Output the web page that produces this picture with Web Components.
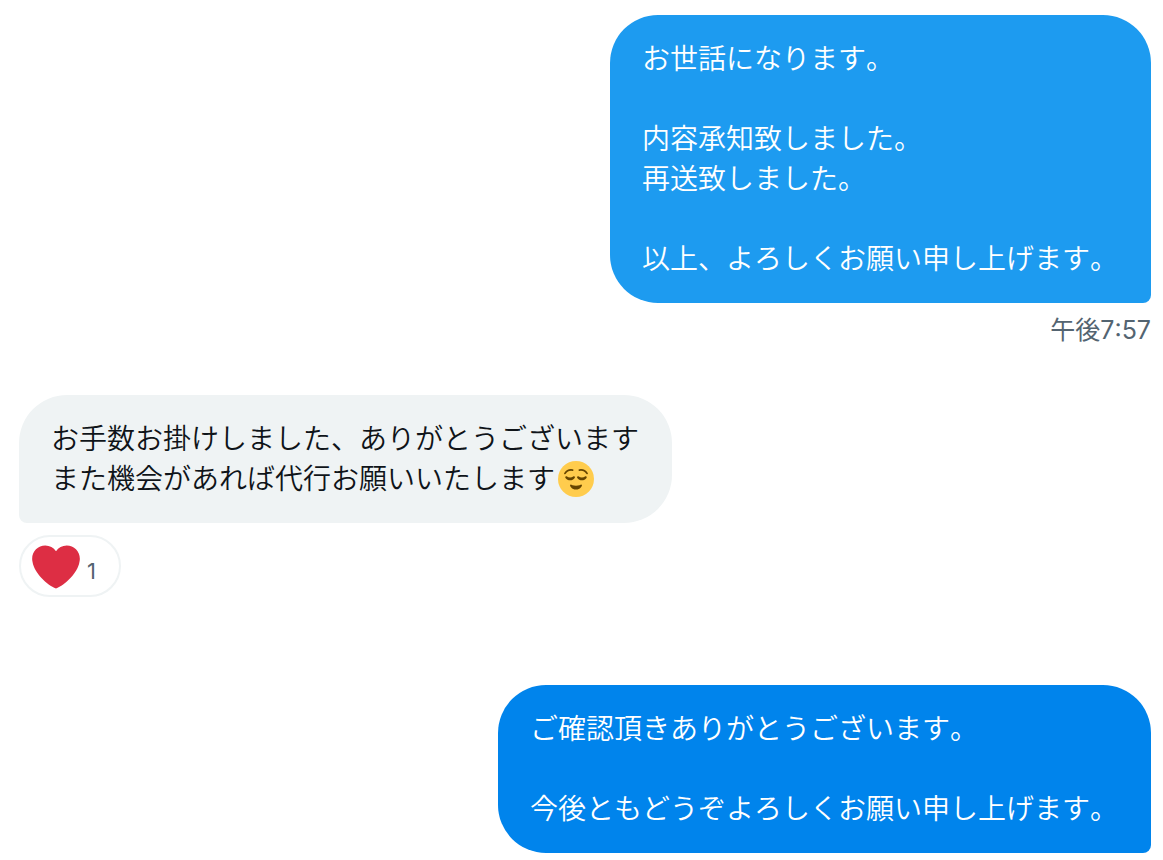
<!DOCTYPE html>
<html lang="ja">
<head>
<meta charset="utf-8">
<meta name="viewport" content="width=device-width, initial-scale=1">
<title>メッセージ</title>
<style>
  body {
    margin: 0;
    background: #ffffff;
    font-family: "Noto Sans CJK JP", sans-serif;
    font-kerning: none;
  }
</style>
</head>
<body>
<chat-thread>
  <chat-message side="sent">
    お世話になります。<br><br>内容承知致しました。<br>再送致しました。<br><br>以上、よろしくお願い申し上げます。
    <time slot="meta" datetime="19:57">午後7:57</time>
  </chat-message>
  <chat-message side="received">
    お手数お掛けしました、ありがとうございます<br>また機会があれば代行お願いいたします<relieved-face></relieved-face>
    <heart-reaction slot="meta" count="1"></heart-reaction>
  </chat-message>
  <chat-message side="sent" active>
    ご確認頂きありがとうございます。<br><br>今後ともどうぞよろしくお願い申し上げます。
  </chat-message>
</chat-thread>

<script>
class ChatThread extends HTMLElement {
  constructor() {
    super();
    this.attachShadow({ mode: 'open' });
    this.shadowRoot.innerHTML = `
      <style>
        :host {
          display: block;
        }

        main {
          display: flex;
          flex-direction: column;
          padding: 15px 12px 7px 19px;
        }

        ::slotted(chat-message:nth-child(2)) {
          margin-top: 48px;
        }

        ::slotted(chat-message:nth-child(3)) {
          margin-top: 88px;
        }
      </style>
      <main><slot></slot></main>
    `;
  }
}

class ChatMessage extends HTMLElement {
  constructor() {
    super();
    this.attachShadow({ mode: 'open' });
    this.shadowRoot.innerHTML = `
      <style>
        :host {
          display: flex;
          flex-direction: column;
          align-items: flex-start;
          gap: 12px;
        }

        :host([side="sent"]) {
          align-items: flex-end;
        }

        .bubble {
          box-sizing: border-box;
          max-width: 80%;
          padding: 22px 33px 26px 32px;
          border-radius: 48px 48px 48px 8px;
          background: #eff3f4;
          color: #0f1419;
          font-size: 28px;
          font-weight: 350;
          line-height: 40px;
        }

        :host([side="sent"]) .bubble {
          border-radius: 48px 48px 8px 48px;
          background: #1d9bf0;
          color: #ffffff;
        }

        :host([side="sent"][active]) .bubble {
          background: #0084ec;
        }

        ::slotted(time) {
          color: #536471;
          font-family: Inter, "Noto Sans CJK JP", sans-serif;
          font-size: 25px;
          font-weight: 400;
          line-height: 30px;
          padding-bottom: 2px;
        }
      </style>
      <div class="bubble"><slot></slot></div>
      <slot name="meta"></slot>
    `;
  }
}

class RelievedFace extends HTMLElement {
  constructor() {
    super();
    this.attachShadow({ mode: 'open' });
    this.shadowRoot.innerHTML = `
      <style>
        :host {
          display: inline-block;
          padding: 4px 2px 0 3px;
          vertical-align: top;
        }

        svg {
          display: block;
          width: 36px;
          height: 36px;
        }
      </style>
      <svg viewBox="0 0 36 36" role="img" aria-label="ほっとした顔">
        <circle cx="18" cy="18" r="18" fill="#ffcc4d"/>
        <g fill="none" stroke="#664500" stroke-width="1.8" stroke-linecap="round">
          <path d="M7 12.4C8.6 9.8 11.4 8.6 14.6 9.1"/>
          <path d="M29 12.4C27.4 9.8 24.6 8.6 21.4 9.1"/>
        </g>
        <g fill="#664500">
          <path d="M7.7 15.5c-.5.3-.6.9-.2 1.4 1.1 1.4 2.7 2.3 4.6 2.3s3.5-.9 4.6-2.3c.4-.5.3-1.1-.2-1.4-.4-.3-.9-.2-1.3.1-.8.7-1.9 1-3.1 1s-2.3-.3-3.1-1c-.4-.3-.9-.4-1.3-.1z"/>
          <path d="M19.5 15.5c-.5.3-.6.9-.2 1.4 1.1 1.4 2.7 2.3 4.6 2.3s3.5-.9 4.6-2.3c.4-.5.3-1.1-.2-1.4-.4-.3-.9-.2-1.3.1-.8.7-1.9 1-3.1 1s-2.3-.3-3.1-1c-.4-.3-.9-.4-1.3-.1z"/>
          <path d="M12.4 23.7c-.4.2-.5.6-.3 1 .1.2 1.500 3.900 5.900 3.900s5.800-3.700 5.900-3.900c.2-.4.1-.8-.3-1-.3-.2-.7-.2-1 0 0 0-1.600 1-4.600 1s-4.600-1-4.600-1c-.3-.2-.7-.2-1 0z"/>
        </g>
      </svg>
    `;
  }
}

class HeartReaction extends HTMLElement {
  constructor() {
    super();
    this.attachShadow({ mode: 'open' });
  }

  connectedCallback() {
    const count = this.getAttribute('count') || '0';
    this.shadowRoot.innerHTML = `
      <style>
        :host {
          display: block;
        }

        button {
          display: flex;
          align-items: center;
          gap: 7px;
          padding: 6px 23px 4px 11px;
          border: 2px solid #eff3f4;
          border-radius: 31px;
          background: #ffffff;
          color: #536471;
          font: 400 22px/48px Inter, sans-serif;
          cursor: pointer;
        }

        svg {
          display: block;
          width: 48px;
          height: 48px;
        }

        span {
          padding-top: 8px;
          line-height: 38px;
        }
      </style>
      <button type="button" aria-label="ハート ${count}">
        <svg viewBox="0 0 36 36" aria-hidden="true">
          <path fill="#dd2e44" d="M35.885 11.833c0-5.45-4.418-9.868-9.867-9.868-3.308 0-6.227 1.633-8.018 4.129-1.791-2.496-4.71-4.129-8.017-4.129-5.45 0-9.868 4.417-9.868 9.868 0 .772.098 1.52.266 2.241C1.751 22.587 11.216 31.568 18 34.034c6.783-2.466 16.249-11.447 17.617-19.959.17-.721.268-1.469.268-2.242z"/>
        </svg>
        <span>${count}</span>
      </button>
    `;
  }
}

customElements.define('chat-thread', ChatThread);
customElements.define('chat-message', ChatMessage);
customElements.define('relieved-face', RelievedFace);
customElements.define('heart-reaction', HeartReaction);
</script>
</body>
</html>
